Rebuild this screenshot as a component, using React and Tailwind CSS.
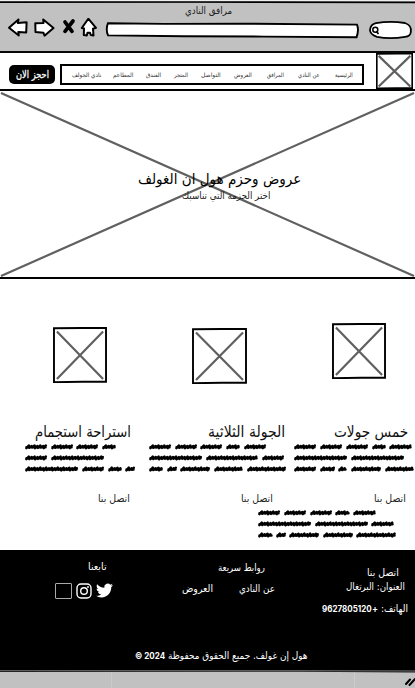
import { useLayoutEffect, useRef, useState } from "react";

// Right-to-left line of text condensed or widened to fill its box.
function Line({ className = "", children }) {
  const box = useRef(null);
  const text = useRef(null);
  const [scale, setScale] = useState(1);
  useLayoutEffect(() => {
    setScale(box.current.clientWidth / text.current.offsetWidth);
  }, [children]);
  return (
    <div ref={box} dir="ltr" className={`flex shrink-0 items-center whitespace-nowrap ${className}`}>
      <span ref={text} dir="rtl" className="block shrink-0 origin-left" style={{ transform: `scaleX(${scale})` }}>
        {children}
      </span>
    </div>
  );
}

function Placeholder({ className = "" }) {
  return (
    <svg viewBox="0 0 55 56" preserveAspectRatio="none" className={`block shrink-0 ${className}`} fill="none">
      <path d="M1 1.3 L30 1 L54 .9 L54 54.8 L30 54.8 L1 55.2Z" fill="white" stroke="black" strokeWidth="1.9" vectorEffect="non-scaling-stroke" />
      <path d="M4 4.5 51 52M51 4.5 4 52" stroke="#606060" strokeWidth="2.2" vectorEffect="non-scaling-stroke" />
    </svg>
  );
}

function scribble(start, end, y) {
  let d = `M${start + 1.5} ${y + 0.6}H${end - 1.5}`;
  for (let x = start + 1.4, i = 0; x < end - 2; x += 2.9, i++) {
    d += `M${x} ${y + 1.5 - (i % 3) * 0.3}L${Math.min(x + 2.4, end - 1.2)} ${y - 1.1 + (i % 2) * 0.5}`;
  }
  return d;
}

function Scribbles({ rows, className = "" }) {
  return (
    <svg height="30" className={`block shrink-0 ${className}`} fill="none" stroke="black" strokeWidth="2.5" strokeLinecap="round">
      {rows.map((row, i) => row.map(([a, b]) => <path key={`${i}-${a}`} d={scribble(a, b, 3.6 + i * 11.1)} />))}
    </svg>
  );
}

const copyLeft = [
  [[0, 22], [26, 48], [51, 73], [77, 91]],
  [[0, 22], [26, 79]],
  [[0, 53], [57, 79], [83, 97], [100, 110]],
];
const copyMiddle = [
  [[0, 22], [26, 48], [51, 73], [77, 91], [95, 117]],
  [[0, 53], [57, 109], [113, 135]],
  [[0, 14], [18, 28], [31, 61], [65, 94], [98, 137]],
];
const copyRight = [
  [[0, 22], [26, 48], [52, 74], [78, 92], [95, 118]],
  [[0, 53], [57, 110]],
  [[0, 22], [26, 41], [44, 53], [57, 87], [91, 120]],
];
const copyExtra = [
  [[0, 22], [26, 48], [52, 74], [77, 92], [95, 118]],
  [[0, 53], [57, 110], [113, 136]],
  [[0, 15], [18, 28], [31, 61], [65, 95], [98, 138]],
];

function BrowserBar() {
  return (
    <header className="h-[53px] bg-[#c1c1c1]">
      <svg width="415" height="4" className="block">
        <path d="M0 0H415V1.5H0Z" fill="#eee" />
        <path d="M0 2.2 200 2 415 2.4" stroke="black" strokeWidth="1.7" />
      </svg>
      <Line className="ml-[185px] h-[14px] w-[47px] text-[10px] text-[#222]">مرافق النادي</Line>
      <div className="flex h-[32px]">
        <svg width="104" height="32" className="block shrink-0" fill="white" stroke="black" strokeWidth="2" strokeLinejoin="round">
          <g transform="translate(0 .5)">
            <path d="M9 9.300 18.500 1 17.800 4.500 26.600 3.800 26.200 14 18.300 13.500 18.800 17Z" />
            <path d="M35.300 4.800 43.500 4.500 43.200 .9 53.500 9.500 44.500 17.200 43.500 14.200 35.500 13.600Z" />
            <path d="M65 3.500 72 12.800M73 2.500 65 12.800" fill="none" strokeWidth="3.700" strokeLinecap="round" />
            <path d="M88.300 .2 96 9.300 93 10.200 93.500 17 90.800 16.500 90 14.300 87.500 14.300 86.800 17 83.800 16.500 84 10 81.800 9.500Z" />
          </g>
        </svg>
        <svg width="256" height="32" className="block shrink-0" fill="white" stroke="black" strokeWidth="1.900">
          <path d="M4 5.200 60 5.900 140 5.700 253 6.600Q255.200 12 252.500 19.300L160 18.600 80 18.300 4 17.400Q1.500 11 4 5.200Z" />
        </svg>
        <svg width="55" height="32" className="block shrink-0" fill="white" stroke="black" strokeWidth="1.800">
          <path d="M16 5.200Q30 2.500 45 5Q52 7.500 50.800 14Q50.500 18.500 45 18.800Q30 21.500 17 18.800Q10 16.500 10 12Q10.500 6.500 16 5.200Z" />
          <circle cx="15.300" cy="11.800" r="2.500" strokeWidth="1.500" />
          <path d="M16.500 13.500 18.500 16" strokeWidth="1.800" />
        </svg>
      </div>
      <div className="mt-[1px] h-[2px] bg-[#080808]" />
    </header>
  );
}

function Nav() {
  return (
    <nav className="flex h-[38px] border-b-2 border-black bg-white">
      <div className="mt-[12px] ml-[9px] flex h-[19px] w-[46px] shrink-0 justify-center rounded-[5px] bg-black text-white">
        <Line className="w-[33px] text-[10.5px] [-webkit-text-stroke:0.3px_white]">احجز الان</Line>
      </div>
      <div className="mt-[11px] ml-[5px] flex h-[21px] w-[304px] shrink-0 border-2 border-black pl-[10px] text-[6px] text-[#333]">
        <Line className="w-[29px]">نادي الجولف</Line>
        <Line className="ml-[12px] w-[20px]">المطاعم</Line>
        <Line className="ml-[13px] w-[15px]">الفندق</Line>
        <Line className="ml-[13px] w-[14px]">المتجر</Line>
        <Line className="ml-[13px] w-[20px]">التواصل</Line>
        <Line className="ml-[13px] w-[18px]">العروض</Line>
        <Line className="ml-[15px] w-[17px]">المرافق</Line>
        <Line className="ml-[14px] w-[22px]">عن النادي</Line>
        <Line className="ml-[15px] w-[18px]">الرئيسية</Line>
      </div>
      <Placeholder className="ml-[12px] h-[36px] w-[37px]" />
    </nav>
  );
}

function Hero() {
  return (
    <section className="grid h-[188px] border-b-2 border-black">
      <svg width="415" height="186" className="col-start-1 row-start-1 block" stroke="#606060" strokeWidth="2.200">
        <path d="M1 2 414 185M414 2 1 185" />
      </svg>
      <div className="z-10 col-start-1 row-start-1 pt-[77px]">
        <Line className="ml-[138px] h-[22px] w-[163px] text-[15px]">عروض وحزم هول ان الغولف</Line>
        <Line className="ml-[182px] h-[12px] w-[88px] text-[10px] text-[#222]">اختر الحزمة التي تناسبك</Line>
      </div>
    </section>
  );
}

function Offers() {
  return (
    <main className="h-[271px] bg-white">
      <div className="flex h-[144px] pt-[44px]">
        <Placeholder className="mt-[4px] ml-[53px] h-[56px] w-[54px]" />
        <Placeholder className="mt-[5px] ml-[85px] h-[56px] w-[55px]" />
        <Placeholder className="ml-[85px] h-[56px] w-[54px]" />
      </div>
      <div className="flex h-[20px] text-[15.5px] text-[#111]">
        <Line className="ml-[35px] w-[96px]">استراحة استجمام</Line>
        <Line className="ml-[77px] w-[77px]">الجولة الثلاثية</Line>
        <Line className="ml-[49px] w-[74px]">خمس جولات</Line>
      </div>
      <div className="flex h-[30px]">
        <Scribbles rows={copyLeft} className="ml-[25px] w-[124px]" />
        <Scribbles rows={copyMiddle} className="w-[145px]" />
        <Scribbles rows={copyRight} className="w-[121px]" />
      </div>
      <div className="mt-[19px] flex h-[14px] text-[10px] text-[#222]">
        <Line className="ml-[98px] w-[32px]">اتصل بنا</Line>
        <Line className="ml-[111px] w-[32px]">اتصل بنا</Line>
        <Line className="ml-[101px] w-[32px]">اتصل بنا</Line>
      </div>
      <Scribbles rows={copyExtra} className="mt-[3px] ml-[258px] w-[145px]" />
    </main>
  );
}

function Footer() {
  return (
    <footer className="h-[120px] bg-black text-[10px] text-white">
      <div className="flex h-[98px]">
        <div className="w-[175px] shrink-0 pt-[10px]">
          <Line className="ml-[88px] h-[13px] w-[19px]">تابعنا</Line>
          <div className="mt-[9px] ml-[55px] flex items-center">
            <div className="h-[16px] w-[17px] rounded-[1px] border border-[#aaa]" />
            <svg width="16" height="16" viewBox="0 0 16 16" className="ml-[4px] block" fill="none" stroke="white" strokeWidth="1.400">
              <rect x="1" y="1" width="14" height="14" rx="4" />
              <circle cx="8" cy="8" r="3.300" />
              <circle cx="12" cy="4" r=".9" fill="white" stroke="none" />
            </svg>
            <svg width="17" height="17" viewBox="0 1 24 22" className="ml-[4px] block" fill="white">
              <path d="M23.953 4.570a10 10 0 01-2.825.775 4.958 4.958 0 002.163-2.723c-.951.555-2.005.959-3.127 1.184a4.920 4.920 0 00-8.384 4.482C7.690 8.095 4.067 6.130 1.640 3.162a4.822 4.822 0 00-.666 2.475c0 1.710.870 3.213 2.188 4.096a4.904 4.904 0 01-2.228-.616v.060a4.923 4.923 0 003.946 4.827 4.996 4.996 0 01-2.212.085 4.936 4.936 0 004.604 3.417 9.867 9.867 0 01-6.102 2.105c-.390 0-.779-.023-1.170-.067a13.995 13.995 0 007.557 2.209c9.053 0 13.998-7.496 13.998-13.985 0-.210 0-.420-.015-.630A9.935 9.935 0 0024 4.590z" />
            </svg>
          </div>
        </div>
        <div className="w-[140px] shrink-0 pt-[11px]">
          <Line className="ml-[43px] h-[14px] w-[47px]">روابط سريعة</Line>
          <div className="mt-[7px] flex h-[14px]">
            <Line className="ml-[7px] w-[31px]">العروض</Line>
            <Line className="ml-[26px] w-[36px]">عن النادي</Line>
          </div>
        </div>
        <div className="w-[100px] shrink-0 pt-[16px]">
          <Line className="ml-[52px] h-[14px] w-[32px]">اتصل بنا</Line>
          <Line className="ml-[31px] h-[14px] w-[59px]">العنوان: البرتغال</Line>
          <div className="mt-[7px] ml-[7px] flex h-[14px]">
            <Line className="w-[50px] font-['Inter'] text-[9px] font-bold">9627805120</Line>
            <Line className="w-[36px]">
              الهاتف: <b className="font-['Inter'] font-semibold">+</b>
            </Line>
          </div>
        </div>
      </div>
      <Line className="ml-[135px] h-[15px] w-[173px]">
        هول إن غولف. جميع الحقوق محفوظة <b className="font-['Inter'] text-[9px] font-bold">2024 ©</b>
      </Line>
    </footer>
  );
}

export default function App() {
  return (
    <div className="h-[688px] w-[415px] overflow-hidden bg-white font-['DejaVu_Sans',sans-serif] leading-none text-black">
      <BrowserBar />
      <Nav />
      <Hero />
      <Offers />
      <Footer />
      <svg width="415" height="18" className="block bg-[#c1c1c1]">
        <path d="M111.500 2V18M354.500 2V18" stroke="#cbcbcb" />
        <path d="M0 0H415V2.500L300 1.700 0 2Z" fill="#111" />
        <path d="M0 .7H300L415 1" stroke="#999" strokeWidth=".7" fill="none" />
        <path d="M406 14 410 9.500M409.500 15 415 9" stroke="black" strokeWidth="2" strokeLinecap="round" />
      </svg>
    </div>
  );
}
